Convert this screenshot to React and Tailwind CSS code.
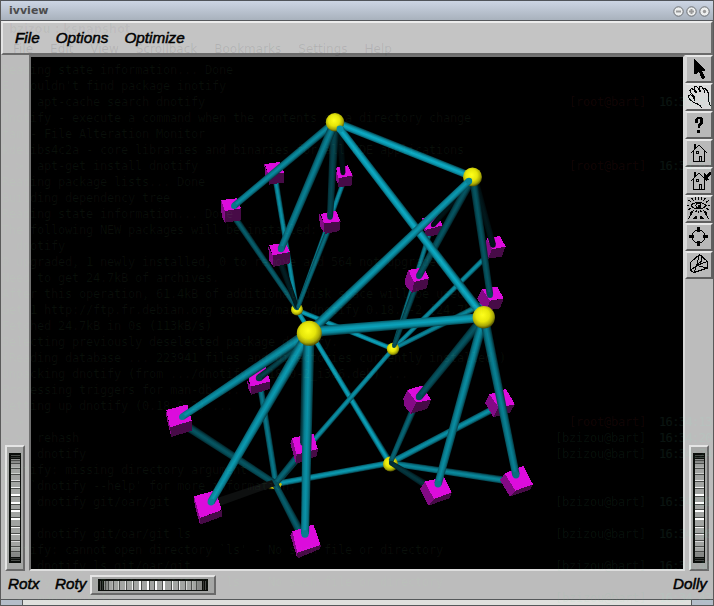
import React from "react";

const TERMINAL = [
  "Reading state information... Done",
  "E: Couldn't find package inotify",
  "~ >  apt-cache search dnotify",
  "dnotify - execute a command when the contents of a directory change",
  "fam - File Alteration Monitor",
  "kdelibs4c2a - core libraries and binaries for all KDE applications",
  "~ >  apt-get install dnotify",
  "Reading package lists... Done",
  "Building dependency tree",
  "Reading state information... Done",
  "The following NEW packages will be installed:",
  "  dnotify",
  "0 upgraded, 1 newly installed, 0 to remove and 564 not upgraded.",
  "Need to get 24.7kB of archives.",
  "After this operation, 61.4kB of additional disk space will be used.",
  "Get:1 http://ftp.fr.debian.org squeeze/main dnotify 0.18.0-2 [24.7kB]",
  "Fetched 24.7kB in 0s (113kB/s)",
  "Selecting previously deselected package dnotify.",
  "(Reading database ... 223941 files and directories currently installed.)",
  "Unpacking dnotify (from .../dnotify_0.18.0-2_i386.deb) ...",
  "Processing triggers for man-db ...",
  "Setting up dnotify (0.18.0-2) ...",
  "~ >",
  "~ >  rehash",
  "~ >  dnotify",
  "dnotify: missing directory argument",
  "Try `dnotify --help' for more information.",
  "~ >  dnotify git/oar/git",
  "~ >",
  "~ >  dnotify git/oar/git ls",
  "dnotify: cannot open directory `ls' - No such file or directory",
  "~ >  dnotify ls git/oar/git",
  "dnotify: cannot open directory `ls' - No such file or directory",
  "~ >  man dnotify",
];

const PROMPTS = {
  2: ["[root@bart]", "16:33:51"],
  6: ["[root@bart]", "16:34:02"],
  22: ["[root@bart]", "16:34:13"],
  23: ["[bzizou@bart]", "16:34:20"],
  24: ["[bzizou@bart]", "16:34:24"],
  27: ["[bzizou@bart]", "16:34:28"],
  29: ["[bzizou@bart]", "16:34:36"],
  31: ["[bzizou@bart]", "16:34:40"],
  33: ["[bzizou@bart]", "16:34:43"],
};

// Faint terminal that shows through the translucent window
function GhostTerminal() {
  return (
    <div className="pointer-events-none absolute inset-0 overflow-hidden">
      <div className="pt-[21px] pl-[8px] font-['DejaVu_Sans'] text-[11.5px] leading-4 font-bold text-black/4">
        bzizou : ksnapshot
      </div>
      <div className="flex gap-[17px] pt-[4px] pl-[12px] font-['DejaVu_Sans'] text-[12px] leading-4 text-black/9">
        <span>File</span>
        <span>Edit</span>
        <span>View</span>
        <span>Scrollback</span>
        <span>Bookmarks</span>
        <span>Settings</span>
        <span>Help</span>
      </div>
      <div className="pt-[5px] pl-[1px] font-['DejaVu_Sans_Mono'] text-[12px] leading-4 tracking-[-0.225px] whitespace-pre">
        {TERMINAL.map((line, i) => (
          <div key={i} className="flex h-4 w-[711px]">
            <span className="grow text-[#a8ffa8]/6">{line}</span>
            {PROMPTS[i] && (
              <>
                <span className={i < 23 ? "w-[90px] text-[#ff4040]/8" : "w-[104px] text-[#60d090]/8"}>
                  {PROMPTS[i][0]}
                </span>
                <span className="w-[54px] tracking-[-0.6px] text-[#80ffd0]/8">{PROMPTS[i][1]}</span>
              </>
            )}
          </div>
        ))}
      </div>
    </div>
  );
}

const tone = (b) => `rgb(${Math.round(12 * b)},${Math.round(172 * b)},${Math.round(198 * b)})`;

// Shaded cylinder from (x1,y1) to (x2,y2), with a width at each end
function Tube({ t, id }) {
  const [x1, y1, x2, y2, w1, w2, b] = t;
  const L = Math.hypot(x2 - x1, y2 - y1);
  let nx = -(y2 - y1) / L;
  let ny = (x2 - x1) / L;
  if (nx < 0) {
    nx = -nx;
    ny = -ny;
  }
  const w = (w1 + w2) / 4;
  const mx = (x1 + x2) / 2;
  const my = (y1 + y2) / 2;
  const p = [
    [x1 + (nx * w1) / 2, y1 + (ny * w1) / 2],
    [x2 + (nx * w2) / 2, y2 + (ny * w2) / 2],
    [x2 - (nx * w2) / 2, y2 - (ny * w2) / 2],
    [x1 - (nx * w1) / 2, y1 - (ny * w1) / 2],
  ];
  return (
    <g>
      <linearGradient
        id={id}
        gradientUnits="userSpaceOnUse"
        x1={mx - nx * w}
        y1={my - ny * w}
        x2={mx + nx * w}
        y2={my + ny * w}
      >
        <stop offset="0" stopColor={tone(b * 0.55)} />
        <stop offset="0.25" stopColor={tone(b * 0.88)} />
        <stop offset="0.5" stopColor={tone(b)} />
        <stop offset="0.75" stopColor={tone(b * 0.8)} />
        <stop offset="1" stopColor={tone(b * 0.38)} />
      </linearGradient>
      <polygon points={p.map((q) => q.join(",")).join(" ")} fill={`url(#${id})`} />
      <circle cx={x2} cy={y2} r={w2 / 2 - 0.3} fill={tone(b * 0.85)} />
    </g>
  );
}

function Cube({ c }) {
  const [ox, oy, top, left, front] = c;
  return (
    <g transform={`translate(${ox} ${oy}) scale(0.33333)`} shapeRendering="crispEdges">
      <polygon points={left} fill="#830a85" />
      <polygon points={front} fill="#470b47" />
      <polygon points={top} fill="#dc0cdc" />
    </g>
  );
}

const Ball = ({ x, y, r }) => <circle cx={x} cy={y} r={r} fill="url(#ball)" />;

const BACK_TUBES = [
  [297, 310, 393, 349, 5, 5, 0.95],
  [297, 310, 390, 463, 4.5, 6.5, 0.95],
  [393, 349, 276, 484, 4.5, 6, 0.85],
  [390, 463, 276, 484, 6, 6, 0.9],
  [297, 310, 275, 176, 4.5, 5.5, 0.85],
  [297, 310, 345, 178, 4.5, 5, 0.85],
  [393, 349, 431, 229, 4.5, 5, 0.75],
  [393, 349, 494, 249, 4.5, 5.5, 0.85],
  [393, 349, 489, 301, 4.5, 6, 0.8],
  [390, 463, 501, 405, 6, 7, 0.85],
  [390, 463, 517, 482, 6, 7.5, 0.8],
  [276, 484, 260, 384, 6, 6, 0.7],
];

const BACK_FRONT = [
  [231, 212, 297, 308, 6.5, 5, 0.55],
  [279, 258, 297, 307, 7, 4, 0.18],
  [330, 226, 298, 307, 5.5, 4, 0.65],
  [417, 284, 394, 346, 6, 4.5, 0.5],
  [417, 401, 391, 461, 7, 5, 0.6],
  [436, 491, 391, 463, 8, 5, 0.32],
  [179, 421, 276, 484, 9, 6.5, 0.5],
  [304, 449, 275, 484, 8, 6, 0.6],
  [305, 541, 275, 484, 9, 6, 0.55],
];

const CUBES = [
  [210, 100, "165,192 209,186 223,218 175,224", "163,192 175,224 175,250 165,226", "175,224 223,216 221,248 176,254"],
  [210, 100, "33,300 80,295 93,325 45,333", "33,300 45,333 45,367 35,350", "45,333 93,325 93,361 45,368"],
  [210, 100, "378,203 414,196 427,226 385,235", "376,205 386,235 386,258 378,240", "386,232 428,226 425,256 385,262"],
  [210, 100, "332,342 378,332 391,364 342,370", "328,342 342,370 343,400 329,378", "342,370 392,362 388,393 344,402"],
  [210, 100, "178,435 226,428 240,456 188,466", "175,440 188,466 190,500 177,480", "188,466 241,456 239,490 190,501"],
  [370, 150, "157,205 203,193 218,226 167,240", "157,205 167,240 172,262 160,235", "167,240 218,224 214,254 165,260"],
  [370, 150, "115,360 162,352 177,385 132,396", "104,390 115,360 134,394 127,428 107,408", "132,396 177,384 170,415 126,428"],
  [370, 150, "350,265 390,258 407,290 366,298", "345,280 352,265 366,298 354,325 345,300", "366,298 407,288 396,320 354,326"],
  [370, 150, "336,418 382,410 401,445 360,452", "322,446 336,418 362,450 352,482 330,460", "360,452 401,446 390,475 350,482"],
  [350, 300, "172,270 217,256 243,299 200,308", "160,296 172,270 201,306 182,342 162,316", "200,306 243,300 232,326 182,342"],
  [350, 300, "418,283 468,267 495,313 446,322", "405,308 418,282 447,320 430,352", "447,320 495,313 480,338 430,352"],
  [350, 300, "224,545 282,531 305,577 252,597", "210,568 224,545 252,597 236,617", "252,597 305,577 300,594 236,617"],
  [350, 300, "464,520 520,498 549,553 496,572", "450,540 465,520 497,572 480,590", "496,572 549,553 540,570 480,590"],
  [150, 300, "49,330 112,313 125,362 60,382", "48,330 60,382 64,411 50,355", "60,382 126,362 126,392 64,411"],
  [150, 300, "290,206 346,200 361,244 302,260", "292,243 303,258 304,284 293,260", "302,258 361,243 360,267 304,284"],
  [150, 430, "426,24 490,10 503,57 440,74", "421,40 427,22 442,72 438,102", "440,72 503,56 502,78 438,102"],
  [150, 430, "132,199 196,181 215,240 150,264", "132,199 150,264 150,284 134,225", "150,264 216,240 215,260 150,284"],
  [150, 430, "427,304 490,283 512,345 442,368", "421,316 427,304 442,368 442,385", "441,368 513,345 510,357 443,385"],
];

const FRONT_TUBES = [
  [339, 124, 343, 173, 8, 5, 0.1],
  [473, 179, 433, 225, 7, 5, 0.12],
  [475, 180, 493, 245, 7, 6, 0.14],
  [335, 122, 330, 217, 9, 6, 0.4],
  [335, 122, 234, 206, 8, 6.5, 0.82],
  [335, 122, 281, 249, 9, 7, 0.75],
  [335, 122, 473, 177, 8, 7.5, 1],
  [473, 177, 419, 276, 8, 6.5, 0.5],
  [473, 177, 490, 295, 8, 6.5, 0.5],
  [484, 317, 419, 397, 9, 7, 0.5],
  [484, 317, 438, 484, 9.5, 7.5, 0.82],
  [484, 317, 516, 475, 9.5, 7.5, 0.75],
  [306, 341, 259, 378, 4, 7, 0.4],
  [306, 340, 303, 443, 8, 6, 0.4],
  [309, 333, 182, 417, 11, 6.5, 0.85],
  [309, 333, 211, 502, 11, 7.5, 0.9],
  [309, 333, 305, 534, 11, 8, 0.85],
];

function Scene() {
  return (
    <svg className="block h-[512px] w-[652px]" viewBox="31 57 652 512">
      <defs>
        <radialGradient id="ball" cx="0.45" cy="0.4" r="0.6">
          <stop offset="0" stopColor="#ffff1c" />
          <stop offset="0.5" stopColor="#e6e60a" />
          <stop offset="0.8" stopColor="#a8a806" />
          <stop offset="1" stopColor="#4d4d02" />
        </radialGradient>
      </defs>
      {BACK_TUBES.map((t, i) => (
        <Tube key={i} t={t} id={`b${i}`} />
      ))}
      <Ball x={297} y={309.5} r={6} />
      <Ball x={393} y={349} r={6.2} />
      <Ball x={390.5} y={464} r={7.5} />
      <path d="M268 488l6 -2v3zM278 481l4 3-2 4z" fill="#c4bd06" />
      {BACK_FRONT.map((t, i) => (
        <Tube key={i} t={t} id={`m${i}`} />
      ))}
      <polygon points="211,500 272,480 275,486 214,508" fill="#0e1010" />
      {CUBES.map((c, i) => (
        <Cube key={i} c={c} />
      ))}
      {FRONT_TUBES.map((t, i) => (
        <Tube key={i} t={t} id={`f${i}`} />
      ))}
      <Ball x={335} y={122.3} r={9.2} />
      <Ball x={472.5} y={177} r={9.5} />
      <Tube id="ac" t={[484, 317, 340, 129, 9, 7.5, 1]} />
      <Tube id="bd" t={[309, 333, 469, 181, 9.5, 7, 0.9]} />
      <Tube id="dc" t={[309, 332, 484, 317.5, 10.5, 9, 0.95]} />
      <Ball x={309.3} y={333.3} r={12.5} />
      <Ball x={483.8} y={317.3} r={11.2} />
    </svg>
  );
}

// Offset along the wheel, thickness and colour of each highlight
const RIDGES = [
  [6, 1, "#8c8e8c"],
  [9, 1, "#8c8e8c"],
  [14, 1, "#b4b6b4"],
  [20, 1, "#d0d2d0"],
  [27, 1, "#e4e4e4"],
  [34, 1, "#f2f2f2"],
  [41, 2, "#ffffff"],
  [49, 2, "#ffffff"],
  [57, 2, "#ffffff"],
  [65, 2, "#ffffff"],
  [74, 1, "#f6f6f6"],
  [81, 1, "#f2f2f2"],
  [88, 1, "#d8d8d8"],
  [94, 1, "#b4b6b4"],
  [99, 1, "#8c8e8c"],
];

// Thumb wheel drawn upright; the horizontal one swaps its axes
function Wheel({ horizontal }) {
  const body = (
    <>
      <rect width="12" height="110" fill="#0a0d0a" />
      <rect x="2" y="6" width="9" height="98" fill="#a2a4a2" />
      <rect x="2" y="6" width="9" height="5" fill="#858785" />
      <rect x="2" y="99" width="9" height="5" fill="#858785" />
      <rect x="2" y="2" width="9" height="1" fill="#4a4d4a" />
      <rect x="2" y="4" width="9" height="1" fill="#333633" />
      <rect x="2" y="105" width="9" height="1" fill="#333633" />
      <rect x="2" y="107" width="9" height="1" fill="#4a4d4a" />
      {RIDGES.map(([y, h, fill]) => (
        <g key={y}>
          <rect x="2" y={y} width="9" height={h} fill={fill} />
          <rect x="2" y={y < 54 ? y + h : y - 1} width="9" height="1" fill="#4c4e4c" />
        </g>
      ))}
    </>
  );
  return horizontal ? (
    <svg className="block h-3 w-[110px]" viewBox="0 0 110 12" shapeRendering="crispEdges">
      <g transform="matrix(0 1 1 0 0 0)">{body}</g>
    </svg>
  ) : (
    <svg className="block h-[110px] w-3" viewBox="0 0 12 110" shapeRendering="crispEdges">
      {body}
    </svg>
  );
}

const bevel = "border-2 border-t-[#e4e4e4] border-l-[#e4e4e4] border-r-[#6a6a6a] border-b-[#6a6a6a]";

function WheelBox({ horizontal }) {
  return (
    <div
      className={`${bevel} flex shrink-0 items-center justify-center bg-[#a5a6a5] ${
        horizontal ? "h-5 w-[126px]" : "h-[126px] w-5"
      }`}
    >
      <Wheel horizontal={horizontal} />
    </div>
  );
}

const House = () => (
  <>
    <path d="M3.500 12.500L12 4L20.500 12.500M6.500 10V20.500H17.500V10M12.500 20V15.500H14.500V20" />
    <path d="M8.500 3v5M7.500 3v6" />
    <rect x="9.500" y="10.500" width="2" height="2" />
  </>
);

const ICONS = [
  <path key="a" fill="#000" stroke="none" d="M7 2V17H9L11 15L13 17L14 21L16 22L18 20L15 14H18V12Z" />,
  <path
    key="h"
    d="M15.500 23.500L13 20.500L9.500 18.500L6.500 17.500L3.500 15L1.500 12.500L1.500 11L3.500 9.500L5.500 11L7.500 14.500V12L3.500 7.500L3 5.500L4.500 3.500L6.500 4.500L9.500 8.500M10.500 8.500L7 4L7.500 1.500L9.500 1.500L11.500 3.500L13.500 7.500M14.500 7.500L12 3L12.500 1.500L14.500 1.500L16.500 4L18 7.500M18.500 7.500L16.500 4.500L17.500 3.500L19.500 4.500L21.500 8.500L22 12.500L21.500 15L22.500 19L23.500 21"
  />,
  <path key="q" fill="#000" stroke="none" d="M8 10V6L10 4H14L16 6V10L13 13V15H11V11L13 9V6H11V10ZM10 17H13V20H10Z" />,
  <House key="o" />,
  <g key="p">
    <House />
    <path fill="#000" stroke="none" d="M17 4V11H22L20.500 9L24 5V3L22 3L19 6Z" />
  </g>,
  <g key="e">
    <path d="M4 8.500C7 4.500 16 4.500 19 8.500C16 13 7 13 4 8.500M1.500 3l3 2.500M4.500 1l2.500 3M8.500 0v3M11.500 0v3M14.500 0v3M18.500 1l-2.500 3M22 3l-3 2.500M0 8.500h2M21 8.500h2M1 13l3-2M22 13l-3-2M6.500 13L1.500 22M16.500 13L21.500 22M9.500 13.500l-1 2M11.500 14v2M13.500 13.500l1 2M3 17l2-3M20 17l-2-3" />
    <circle cx="11.500" cy="8.500" r="2.500" />
    <rect x="11" y="8" width="1" height="1" fill="#000" />
    <path fill="#000" stroke="none" d="M6 22L9 18L10 20V22ZM17 22L14 18L13 20V22Z" />
  </g>,
  <g key="t">
    <circle cx="11.500" cy="11.500" r="6.500" />
    <path strokeWidth="3" d="M11.500 2V7M11.500 16V21M2 11.500H7M16 11.500H21" />
  </g>,
  <path
    key="c"
    d="M3.500 9.500L12.500 1.500L20.500 8.500V15L7 19.500L3.500 17.500ZM12.500 1.500L9.500 12.500L3.500 17.500M9.500 12.500L20.500 15M9.500 12.500L7 19.500M12.500 1.500L14.500 3V8L9.500 12.500L20.500 8.500"
  />,
];

function ToolButton({ icon, active }) {
  return (
    <div
      className={`h-7 w-7 border-2 border-t-[#e8e8e8] border-l-[#d9d9d9] border-r-[#5f5f5f] border-b-[#5f5f5f] ${
        active ? "bg-[#dadada]" : "bg-[#b9b9b9]"
      }`}
    >
      <svg className="block h-6 w-6" viewBox="0 0 24 24" fill="none" stroke="#000" strokeWidth="1" shapeRendering="crispEdges">
        {icon}
      </svg>
    </div>
  );
}

function WindowButton({ children }) {
  return (
    <svg className="block h-[11px] w-[11px]" viewBox="0 0 11 11" fill="none">
      <circle cx="5.500" cy="5.500" r="4.700" fill="#eceeee" stroke="#686c70" />
      {children}
    </svg>
  );
}

const label =
  "font-['Liberation_Sans'] text-[15.3px] leading-4 italic text-black [-webkit-text-stroke:0.5px_#000]";

export default function App() {
  return (
    <div className="relative flex h-[606px] w-[714px] flex-col overflow-hidden border-x border-[#5a5a5a] bg-[#bcbcbc]">
      <div className="flex h-[21px] shrink-0 items-center justify-between border-t border-b border-t-[#50545a] border-b-[#55585c] bg-linear-to-b from-[#ccd5e4] to-[#a9b2bd] pt-[1px] pr-[3px] pl-[8px]">
        <span className="font-['DejaVu_Sans'] text-[11px] leading-4 font-bold text-[#4c4c4c]">ivview</span>
        <div className="flex gap-[2px]">
          <WindowButton>
            <path d="M3 5.500h5" stroke="#999" strokeWidth="2" />
          </WindowButton>
          <WindowButton>
            <path d="M3 5.500h5M5.500 3v5" stroke="#999" strokeWidth="2" />
          </WindowButton>
          <WindowButton>
            <circle cx="5.500" cy="5.500" r="1.700" fill="#999" />
          </WindowButton>
        </div>
      </div>

      <div className="flex h-[34px] shrink-0 items-center gap-[16px] border-2 border-t-[#ececec] border-r-[#6b6b6b] border-b-[#6b6b6b] border-l-[#e4e4e4] bg-[#c4c4c4] pl-[12px]">
        <span className={label}>File</span>
        <span className={label}>Options</span>
        <span className={label}>Optimize</span>
      </div>

      <div className="flex h-[516px] shrink-0">
        <div className="flex w-7 flex-col justify-end pl-1">
          <WheelBox />
        </div>
        <div className="h-[516px] w-[656px] border-2 border-t-[#737373] border-r-[#d9d9d9] border-b-[#dedede] border-l-[#707070] bg-black">
          <Scene />
        </div>
        <div className="flex w-7 flex-col justify-between">
          <div>
            {ICONS.map((icon, i) => (
              <ToolButton key={i} icon={icon} active={i === 1} />
            ))}
          </div>
          <div className="pl-1">
            <WheelBox />
          </div>
        </div>
      </div>

      <div className="flex h-7 shrink-0 items-center pr-[6px] pl-[7px]">
        <span className={`${label} w-[47px] pb-[3px]`}>Rotx</span>
        <span className={`${label} w-[35px] pb-[3px]`}>Roty</span>
        <WheelBox horizontal />
        <span className={`${label} ml-auto pb-[3px]`}>Dolly</span>
      </div>

      <div className="flex h-[7px] shrink-0 border-y border-[#55585a] bg-[#dfe0dd]">
        <div className="w-[22px] border-r border-[#55585a] bg-[#b4bdc9]" />
        <div className="grow" />
        <div className="w-[22px] border-l border-[#55585a] bg-[#b4bdc9]" />
      </div>

      <GhostTerminal />
    </div>
  );
}
